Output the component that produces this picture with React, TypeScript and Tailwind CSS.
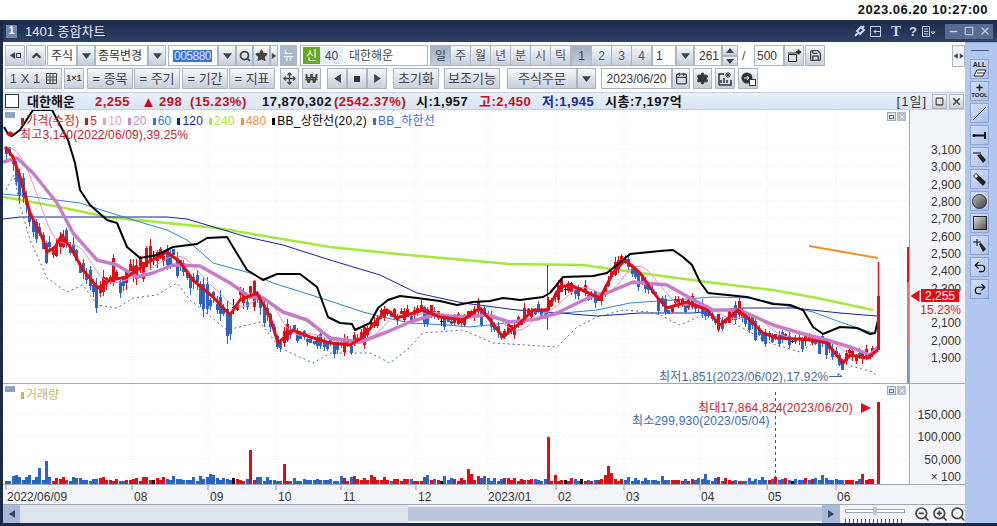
import type { ReactNode } from "react";
import { Search, Star, Move, ChevronUp, Settings, Plus, Undo2, Redo2, ZoomIn, ZoomOut, Calendar, Save, Minus, Square, X } from "lucide-react";

type Pt = [number, number];

const bbUpper: Pt[] = [[4,127],[8,134],[12,136],[20,130],[33,110],[52,110],[60,125],[68,140],[75,163],[80,190],[90,205],[107,220],[117,223],[127,247],[140,258],[157,255],[173,247],[197,244],[207,238],[227,237],[247,270],[263,280],[277,274],[300,274],[317,287],[328,317],[340,323],[352,324],[355,330],[370,323],[378,308],[388,300],[400,296],[417,298],[440,301],[457,305],[473,302],[490,301],[503,298],[520,300],[543,297],[550,293],[563,277],[593,276],[607,273],[613,268],[623,260],[630,254],[660,251],[673,250],[683,257],[692,265],[700,282],[708,293],[747,297],[773,304],[790,305],[803,310],[813,327],[823,334],[840,327],[857,328],[870,334],[875,333],[878,320]];
const ma240: Pt[] = [[3,197],[60,207],[107,217],[167,223],[217,228],[330,247],[397,254],[510,264],[583,265],[640,273],[707,282],[773,290],[817,298],[873,310]];
const ma120: Pt[] = [[3,219],[20,217],[167,217],[187,219],[247,237],[283,245],[330,260],[380,275],[417,293],[463,303],[517,310],[560,313],[597,316],[640,313],[693,313],[740,308],[793,308],[840,313],[877,316]];
const ma60: Pt[] = [[3,194],[33,197],[80,203],[133,220],[167,230],[187,240],[213,263],[250,273],[273,283],[330,301],[363,312],[387,318],[410,323],[447,325],[470,327],[507,323],[547,317],[563,313],[597,310],[630,303],[673,300],[713,297],[750,298],[783,305],[813,312],[840,322],[873,333]];
const ma20: Pt[] = [[3,162],[17,158],[33,173],[57,203],[73,233],[97,260],[117,265],[137,277],[153,273],[173,265],[200,266],[230,283],[250,297],[263,298],[283,312],[307,320],[330,338],[360,342],[387,332],[410,322],[433,315],[463,317],[487,315],[510,322],[537,319],[557,313],[590,297],[607,293],[633,282],[667,285],[690,298],[713,310],[740,310],[773,325],[800,333],[827,340],[853,348],[870,355],[878,347]];
const ma5: Pt[] = [[5,147],[13,157],[20,177],[30,213],[37,227],[42,237],[47,252],[55,247],[62,235],[72,250],[83,270],[98,288],[110,280],[127,277],[147,263],[167,252],[180,262],[193,280],[213,297],[230,315],[240,300],[257,293],[270,317],[278,343],[293,330],[310,337],[330,343],[350,345],[363,337],[373,325],[387,310],[397,318],[423,310],[440,317],[463,320],[480,308],[490,320],[503,337],[520,323],[533,310],[547,310],[560,287],[570,285],[593,295],[600,298],[613,273],[625,260],[640,273],[657,297],[667,308],[687,302],[707,310],[720,325],[738,310],[750,320],[763,333],[777,338],[813,340],[827,343],[843,363],[850,355],[867,358],[878,350]];
const bbLower: Pt[] = [[6,190],[14,175],[20,205],[30,240],[47,278],[67,292],[83,285],[97,305],[117,308],[133,298],[157,295],[177,283],[190,300],[227,330],[260,322],[280,348],[313,363],[330,353],[370,353],[390,363],[407,350],[423,333],[463,330],[493,343],[557,347],[577,327],[597,317],[623,310],[650,312],[660,315],[680,325],[707,313],[743,328],[767,342],[800,352],[820,338],[840,363],[873,372],[878,377]];

const toPoints = (pts: Pt[]) => pts.map((p) => p.join(",")).join(" ");

function interp(pts: Pt[], x: number) {
  if (x <= pts[0][0]) return pts[0][1];
  for (let i = 1; i < pts.length; i++) {
    if (x <= pts[i][0]) {
      const t = (x - pts[i - 1][0]) / (pts[i][0] - pts[i - 1][0]);
      return pts[i - 1][1] + t * (pts[i][1] - pts[i - 1][1]);
    }
  }
  return pts[pts.length - 1][1];
}

let seed = 20230620;
function rnd() {
  seed = (seed * 16807) % 2147483647;
  return (seed - 1) / 2147483646;
}

const RED = "#e00c16";
const BLUE = "#2a64c4";

// hand-read volume spikes, bar index -> height in px
const volumeSpikes: Record<number, number> = { 10: 16, 12: 23, 73: 34, 83: 20, 138: 15, 162: 47, 164: 9, 180: 18, 181: 11 };

const bars = Array.from({ length: 260 }, (_, i) => {
  const x = 6 + i * 3.345;
  const mid = interp(ma5, x);
  const slope = interp(ma5, x + 4) - interp(ma5, x - 4);
  const roll = rnd();
  const color = roll < 0.03 ? "#111111" : rnd() + slope * 0.09 > 0.5 ? BLUE : RED;
  const amp = x < 270 ? 1.6 : 1;
  const body = color === "#111111" ? 1 : (3 + rnd() * rnd() * 17) * amp;
  const top = mid - body * (color === BLUE ? 0.3 : 0.65) + (rnd() - 0.5) * 9 * amp;
  const wickUp = rnd() * 5 * amp;
  const wickDown = rnd() * 5 * amp;
  const vol = volumeSpikes[i] ?? Math.round(3 + rnd() * rnd() * 8);
  return { x: Math.round(x), top: Math.round(top), body: Math.round(body), wickUp, wickDown, color, vol };
});

const ma10: Pt[] = bars.map((b) => {
  let sum = 0;
  for (let k = 0; k < 8; k++) sum += interp(ma5, b.x - k * 3.3);
  return [b.x, sum / 8];
});

const months = [
  { label: "2022/06/09", x: 7, tick: 6 },
  { label: "08", x: 134, tick: 132 },
  { label: "09", x: 210, tick: 208 },
  { label: "10", x: 278, tick: 276 },
  { label: "11", x: 343, tick: 341 },
  { label: "12", x: 418, tick: 416 },
  { label: "2023/01", x: 488, tick: 488 },
  { label: "02", x: 558, tick: 556 },
  { label: "03", x: 626, tick: 624 },
  { label: "04", x: 701, tick: 700 },
  { label: "05", x: 768, tick: 767 },
  { label: "06", x: 837, tick: 836 },
];

const legend = [
  { swatch: "bg-[#e00c16]", text: "text-[#d0242c]", label: "가격(수정)" },
  { swatch: "bg-[#e00c16]", text: "text-[#d0242c]", label: "5" },
  { swatch: "bg-[#f09ad0]", text: "text-[#f09ad0]", label: "10" },
  { swatch: "bg-[#cc88d0]", text: "text-[#cc88d0]", label: "20" },
  { swatch: "bg-[#2a80d0]", text: "text-[#2a80d0]", label: "60" },
  { swatch: "bg-[#101fa0]", text: "text-[#101fa0]", label: "120" },
  { swatch: "bg-[#a0e840]", text: "text-[#a0e840]", label: "240" },
  { swatch: "bg-[#f09030]", text: "text-[#f09030]", label: "480" },
  { swatch: "bg-black", text: "text-black", label: "BB_상한선(20,2)" },
  { swatch: "bg-[#3a6ed8]", text: "text-[#3a6ed8]", label: "BB_하한선" },
];

const btn = "flex shrink-0 items-center justify-center h-[21px] border border-[#aab5c6] bg-gradient-to-b from-[#f6f8fb] to-[#c6cedb] text-[#444]";
const inputBox = "flex shrink-0 items-center h-[21px] border border-[#aab5c6] bg-white text-[#333]";
const dim = "text-[#8c95a5]";

function Tri({ dir, size = 7, color = "#3c4454" }: { dir: "l" | "r" | "u" | "d"; size?: number; color?: string }) {
  const d = { l: "M7 0L1 4l6 4z", r: "M1 0l6 4-6 4z", u: "M0 6l4-5 4 5z", d: "M0 2l4 5 4-5z" }[dir];
  return (
    <svg width={size} height={size} viewBox="0 0 8 8">
      <path d={d} fill={color} />
    </svg>
  );
}

function Drop({ className = "w-[18px]" }: { className?: string }) {
  return (
    <div className={`${btn} ${className}`}>
      <Tri dir="d" size={9} />
    </div>
  );
}

function TabBtn({ label, active }: { label: string; active?: boolean }) {
  return (
    <div className={`flex h-[19px] w-[20px] shrink-0 items-center justify-center border-r border-[#aab5c6] ${active ? "bg-gradient-to-b from-[#a4aebf] to-[#c4ccd9] text-[#3a4250]" : "bg-gradient-to-b from-[#f6f8fb] to-[#c6cedb] text-[#555]"}`}>
      {label}
    </div>
  );
}

function PaneControls() {
  return (
    <div className="absolute right-[3px] top-[2px] flex gap-[1px]">
      <div className="flex h-[9px] w-[9px] items-center justify-center border border-[#9aa6b8] bg-[#dfe4ec]">
        <div className="h-[4px] w-[5px] border border-[#667080]" />
      </div>
      <div className="flex h-[9px] w-[9px] items-center justify-center bg-[#b4becc] text-white">
        <X size={8} strokeWidth={2.5} />
      </div>
    </div>
  );
}

function ToolBtn({ children }: { children: ReactNode }) {
  return (
    <div className="flex h-[20px] w-[19px] shrink-0 items-center justify-center border border-[#8fa6d4] bg-gradient-to-br from-[#d4e0f8] to-[#a9bfe9]">
      {children}
    </div>
  );
}

function PriceChart() {
  return (
    <svg width="906" height="273" viewBox="3 110 906 273" className="block">
      {[149, 166, 184, 201, 218, 236, 253, 270, 288, 305, 322, 339, 357].map((y) => (
        <line key={y} x1="4" x2="906" y1={y} y2={y} stroke="#e6eaf0" strokeDasharray="1 2" />
      ))}
      {months.map((m) => (
        <line key={m.label} x1={m.tick} x2={m.tick} y1="110" y2="383" stroke="#e6eaf0" strokeDasharray="1 2" />
      ))}
      <polyline points={toPoints(ma240)} fill="none" stroke="#a4e83c" strokeWidth="2.5" />
      <polyline points={toPoints(ma120)} fill="none" stroke="#1420a0" strokeWidth="1" />
      <polyline points={toPoints(ma60)} fill="none" stroke="#2c86c8" strokeWidth="1" />
      <polyline points={toPoints(bbLower)} fill="none" stroke="#4a6a9c" strokeWidth="1" strokeDasharray="2 3" />
      <polyline points="809,246 878,258" fill="none" stroke="#f0902c" strokeWidth="2" />
      {bars.map((b) => (
        <g key={b.x} shapeRendering="crispEdges">
          <line x1={b.x + 0.5} x2={b.x + 0.5} y1={b.top - b.wickUp} y2={b.top + b.body + b.wickDown} stroke={b.color} />
          <rect x={b.x - 1} y={b.top} width="3" height={b.body} fill={b.color} />
        </g>
      ))}
      <line x1="547.5" x2="547.5" y1="265" y2="330" stroke={RED} />
      <polyline points={toPoints(ma10)} fill="none" stroke="#f090c8" strokeWidth="1" />
      <polyline points={toPoints(ma20)} fill="none" stroke="#c87cc8" strokeWidth="3.5" strokeLinejoin="round" />
      <polyline points={toPoints(ma5)} fill="none" stroke={RED} strokeWidth="3" strokeLinejoin="round" />
      <polyline points={toPoints(bbUpper)} fill="none" stroke="#000" strokeWidth="2" strokeLinejoin="round" />
      <line x1="878.5" x2="878.5" y1="262" y2="296" stroke={RED} strokeWidth="1.5" />
      <rect x="877" y="296" width="3" height="54" fill={RED} />
      <path d="M829 376.500h13m0 0l-4-3v3" fill="none" stroke="#3a6a9c" />
      <rect x="907" y="247" width="3" height="35" fill="#d81820" />
      <rect x="907" y="282" width="3" height="66" fill="#e87074" />
      <rect x="907" y="348" width="3" height="35" fill="#6a9ad8" />
      <path d="M6 134l4-3 4 3-4 3z" fill={RED} />
    </svg>
  );
}

function VolumeChart() {
  return (
    <svg width="906" height="100" viewBox="3 384 906 100" className="block">
      {[414, 436, 459].map((y) => (
        <line key={y} x1="4" x2="906" y1={y} y2={y} stroke="#e6eaf0" strokeDasharray="1 2" />
      ))}
      {months.map((m) => (
        <line key={m.label} x1={m.tick} x2={m.tick} y1="384" y2="484" stroke="#e6eaf0" strokeDasharray="1 2" />
      ))}
      <line x1="775.5" x2="775.5" y1="392" y2="484" stroke="#2a5a9c" strokeDasharray="3 3" />
      {bars.map((b) => (
        <rect key={b.x} x={b.x - 1} y={484 - b.vol} width="3" height={b.vol} fill={b.color} shapeRendering="crispEdges" />
      ))}
      <rect x="877" y="402" width="3" height="82" fill={RED} />
      <path d="M861 403l10 5-10 5z" fill={RED} />
    </svg>
  );
}

export default function App() {
  return (
    <div className="flex h-[526px] w-[997px] flex-col overflow-hidden bg-white font-['Liberation_Sans','Noto_Sans_CJK_KR',sans-serif] text-[12px] leading-none">
      <div className="h-[20px] shrink-0 pr-[9px] pt-[3px] text-right text-[13px] font-bold tracking-[0.5px] text-[#111]">2023.06.20 10:27:00</div>

      <div className="flex min-h-0 flex-1 flex-col bg-[#1c2946] pb-[3px] pl-[3px]">
        <div className="flex h-[22px] shrink-0 items-center bg-gradient-to-b from-[#1d2a4a] to-[#2e4067] text-white">
          <div className="ml-[3px] flex h-[13px] w-[11px] items-center justify-center bg-[#6f86ad] text-[10px] font-bold">1</div>
          <span className="ml-[8px] text-[13px] text-[#e6ebf4]">1401 종합차트</span>
          <div className="ml-auto flex items-center text-[#c8d2e2]">
            <svg width="12" height="12" viewBox="0 0 12 12"><path d="M1 11l3-3M3 6l3 3 4-4-3-3zM8 3l2-2" fill="none" stroke="currentColor" strokeWidth="2" /></svg>
            <svg className="ml-[4px]" width="12" height="11" viewBox="0 0 12 11"><path d="M.5.5h10v10h-10zM11 5.500H4m2-2l-2 2 2 2" fill="none" stroke="currentColor" /></svg>
            <span className="ml-[9px] font-['Liberation_Serif',serif] text-[15px] font-bold">T</span>
            <span className="ml-[8px] text-[13px] font-bold">?</span>
            <svg className="ml-[5px]" width="14" height="11" viewBox="0 0 14 11"><path d="M.5.500h7v10h-7zM2 3h4M2 5.500h4M2 8h4M9 6h4l-2 2z" fill="none" stroke="currentColor" /></svg>
            <div className="ml-[9px] flex h-[15px] w-[16px] items-center justify-center bg-[#566c90]"><Minus size={11} strokeWidth={3} /></div>
            <div className="flex h-[15px] w-[16px] items-center justify-center bg-[#566c90]"><Square size={10} strokeWidth={2.5} /></div>
            <div className="flex h-[15px] w-[16px] items-center justify-center bg-[#566c90]"><X size={12} strokeWidth={2.5} /></div>
            <div className="w-[4px]" />
          </div>
        </div>

        <div className="flex min-h-0 flex-1">
          <div className="flex w-[962px] shrink-0 flex-col bg-white">
            {/* 1st toolbar */}
            <div className="mt-[3px] flex h-[21px] shrink-0 items-center pl-[2px]">
              <div className={`${btn} w-[20px]`}><Tri dir="l" /><div className="h-[5px] w-[5px] border border-[#3c4454]" /></div>
              <div className={`${btn} ml-[1px] w-[20px]`}><ChevronUp size={13} strokeWidth={4} /></div>
              <div className={`${inputBox} ml-[1px] w-[30px] pl-[3px]`}>주식</div>
              <Drop />
              <div className={`${inputBox} w-[53px] pl-[2px]`}>종목변경</div>
              <Drop />
              <div className={`${inputBox} ml-[2px] w-[50px] pl-[4px]`}><span className="bg-[#3a74d8] px-px tracking-[-0.5px] text-[#dbe6fa]">005880</span></div>
              <Drop />
              <div className={`${btn} w-[17px]`}><Search size={12} strokeWidth={3.500} /></div>
              <div className={`${btn} w-[17px]`}><Star size={13} fill="currentColor" /></div>
              <div className={`${btn} w-[8px]`}><Tri dir="r" size={6} /></div>
              <div className="ml-[2px] flex h-[21px] w-[17px] shrink-0 items-center justify-center bg-[#a9b6cc] text-white">뉴</div>
              <div className={`${inputBox} ml-[3px] w-[128px] pl-[2px]`}>
                <div className="flex h-[17px] w-[17px] items-center justify-center bg-[#6aa818] text-white">신</div>
                <div className="flex h-[17px] w-[23px] items-center justify-center bg-[#e4eefa] text-[#445]">40</div>
                <span className="ml-[6px] text-[#444]">대한해운</span>
              </div>
              <div className="ml-[2px] flex border border-[#aab5c6]">
                {["일", "주", "월", "년", "분", "시", "틱"].map((t, i) => <TabBtn key={t} label={t} active={i === 0} />)}
              </div>
              <div className="flex border-y border-[#aab5c6]">
                {["1", "2", "3", "4"].map((t, i) => <TabBtn key={t} label={t} active={i === 0} />)}
              </div>
              <div className={`${inputBox} w-[24px] pl-[3px]`}>1</div>
              <Drop />
              <div className={`${inputBox} w-[28px] justify-end pr-[2px]`}>261</div>
              <div className="flex h-[21px] w-[16px] shrink-0 flex-col">
                <div className={`${btn} !h-[11px] w-[16px]`}><Tri dir="u" size={8} /></div>
                <div className={`${btn} !h-[10px] w-[16px]`}><Tri dir="d" size={8} /></div>
              </div>
              <span className="ml-[4px] w-[12px] text-[#444]">/</span>
              <div className={`${inputBox} w-[30px] pl-[2px]`}>500</div>
              <div className={`${btn} w-[20px]`}><svg width="15" height="13" viewBox="0 0 15 13"><path d="M1.500 5.500h8v7h-8zM1 4h9" fill="none" stroke="#222" /><path d="M9 3h5M11.500 .5v5" stroke="#222" strokeWidth="2" /></svg></div>
              <div className={`${btn} ml-[1px] w-[20px]`}><Save size={13} strokeWidth={2.5} /></div>
              <div className="ml-auto flex h-[22px] w-[13px] items-center justify-center border border-[#aab5c6] bg-[#f0f3f8]"><Tri dir="l" size={6} /><Tri dir="r" size={6} /></div>
            </div>

            {/* 2nd toolbar */}
            <div className="mt-[2px] flex h-[21px] shrink-0 items-center pl-[2px] text-[13px]">
              <div className={`${btn} ${dim} w-[57px] gap-[6px]`}>
                <span>1 X 1</span>
                <svg width="11" height="11" viewBox="0 0 11 11"><path d="M.5.5h10v10H.5zM.5 4h10M.5 7h10M4 .5v10M7 .5v10" fill="none" stroke="#444" /></svg>
              </div>
              <div className={`${btn} ml-[2px] w-[20px] text-[9px] font-bold`}>1×1</div>
              <div className={`${btn} ${dim} ml-[3px] w-[46px]`}>= 종목</div>
              <div className={`${btn} ${dim} ml-[1px] w-[46px]`}>= 주기</div>
              <div className={`${btn} ${dim} ml-[2px] w-[46px]`}>= 기간</div>
              <div className={`${btn} ${dim} ml-[1px] w-[46px]`}>= 지표</div>
              <div className={`${btn} ml-[5px] w-[19px]`}><Move size={13} strokeWidth={2.5} /></div>
              <div className={`${btn} ml-[3px] w-[19px] font-bold`}>₩</div>
              <div className={`${btn} ml-[6px] w-[20px]`}><Tri dir="l" size={9} /></div>
              <div className={`${btn} w-[20px]`}><div className="h-[6px] w-[6px] bg-[#333]" /></div>
              <div className={`${btn} w-[20px]`}><Tri dir="r" size={9} /></div>
              <div className={`${btn} ml-[6px] w-[46px]`}>초기화</div>
              <div className={`${btn} ml-[5px] w-[56px]`}>보조기능</div>
              <div className={`${btn} ml-[7px] w-[70px]`}>주식주문</div>
              <Drop className="w-[19px]" />
              <div className={`${inputBox} ml-[5px] w-[71px] justify-center text-[12px]`}>2023/06/20</div>
              <div className={`${btn} w-[18px]`}><Calendar size={13} strokeWidth={2.5} /></div>
              <div className={`${btn} ml-[3px] w-[19px]`}><Settings size={13} fill="#333" strokeWidth={2} /></div>
              <div className={`${btn} ml-[3px] w-[20px]`}><svg width="14" height="14" viewBox="0 0 14 14"><path d="M1 13V2h5M1 13h12V8M3 11V8M6 11V6M9 11V8" fill="none" stroke="#333" strokeWidth="1.500" /><path d="M8 1l4 4M12 1L8 5M10 0v6M7 3h6" stroke="#333" /></svg></div>
              <div className={`${btn} ml-[3px] w-[20px]`}><svg width="15" height="14" viewBox="0 0 15 14"><circle cx="6" cy="6" r="5.500" fill="#333" /><path d="M3 6h5M6 4l2 2-2 2" stroke="#fff" fill="none" /><rect x="8.500" y="7.500" width="6" height="6" fill="#fff" stroke="#333" /></svg></div>
            </div>

            {/* stock info */}
            <div className="mt-[3px] flex h-[18px] shrink-0 items-center border-y border-[#c2d0e4] bg-gradient-to-b from-[#e8f0fb] to-[#d8e5f7] pl-[2px] text-[13px] font-bold tracking-[0.5px] text-[#111]">
              <div className="h-[14px] w-[14px] border border-[#333] bg-white" />
              <span className="ml-[8px] w-[68px] tracking-normal">대한해운</span>
              <span className="w-[46px] text-[#c4101c]">2,255</span>
              <span className="w-[18px] text-[15px] text-[#c4101c]">▲</span>
              <span className="w-[31px] text-[#c4101c]">298</span>
              <span className="w-[72px] text-[#c4101c]">(15.23%)</span>
              <span className="w-[72px]">17,870,302</span>
              <span className="w-[82px] text-[#c4101c]">(2542.37%)</span>
              <span className="w-[63px]">시:1,957</span>
              <span className="w-[63px] text-[#c4101c]">고:2,450</span>
              <span className="w-[63px] text-[#1a2aa0]">저:1,945</span>
              <span className="w-[80px]">시총:7,197억</span>
              <span className="ml-auto text-[13px] font-normal tracking-[1px] text-[#333]">[1일]</span>
              <div className={`${btn} ml-[5px] !h-[15px] w-[15px]`}><Square size={9} strokeWidth={3} /></div>
              <div className={`${btn} ml-[2px] mr-[1px] !h-[15px] w-[15px]`}><X size={11} strokeWidth={3.500} /></div>
            </div>

            {/* price pane */}
            <div className="flex h-[274px] shrink-0 border-b border-[#9aa8ba]">
              <div className="relative w-[907px] shrink-0 overflow-hidden border-r border-[#9aa8ba]">
                <PriceChart />
                <div className="absolute left-[2px] top-[2px] h-[6px] w-[10px] bg-[#8ea2c2]" />
                <div className="absolute left-[18px] top-[5px] flex items-center gap-[6px] text-[12px] tracking-[0.2px]">
                  {legend.map((l) => (
                    <span key={l.label} className={`flex items-center gap-[2px] ${l.text}`}>
                      <span className={`h-[7px] w-[3px] ${l.swatch}`} />
                      {l.label}
                    </span>
                  ))}
                </div>
                <div className="absolute left-[17px] top-[19px] tracking-[0.15px] text-[#c8202c]">최고3,140(2022/06/09),39.25%</div>
                <div className="absolute left-[656px] top-[261px] tracking-[0.2px] text-[#3a6a9c]">최저1,851(2023/06/02),17.92%</div>
                <PaneControls />
              </div>
              <div className="relative flex-1 bg-[#f3f5f8] pt-[32px] text-right text-[12px] leading-[17.33px] text-[#333]">
                {["3,100", "3,000", "2,900", "2,800", "2,700", "2,600", "2,500", "2,400", "2,300", "", "2,100", "2,000", "1,900"].map((v, i) => (
                  <div key={i} className="h-[17.33px] pr-[4px]">{v}</div>
                ))}
                <div className="absolute left-[-1px] top-[180px]"><Tri dir="l" size={12} color={RED} /></div>
                <div className="absolute left-[11px] top-[179px] flex h-[13px] w-[38px] items-center justify-end bg-[#e00c16] pr-[4px] leading-none text-white">2,255</div>
                <div className="absolute right-[4px] top-[194px] leading-none text-[#d0242c]">15.23%</div>
              </div>
            </div>

            {/* volume pane */}
            <div className="flex h-[100px] shrink-0">
              <div className="relative w-[907px] shrink-0 overflow-hidden border-r border-[#9aa8ba]">
                <VolumeChart />
                <div className="absolute left-[2px] top-[2px] h-[6px] w-[10px] bg-[#8ea2c2]" />
                <div className="absolute left-[18px] top-[5px] flex items-center gap-[2px] text-[#c8b860]">
                  <span className="h-[7px] w-[3px] bg-[#c8b860]" />거래량
                </div>
                <div className="absolute left-[695px] top-[18px] tracking-[0.2px] text-[#c8202c]">최대17,864,824(2023/06/20)</div>
                <div className="absolute left-[629px] top-[31px] tracking-[0.2px] text-[#3a6ab0]">최소299,930(2023/05/04)</div>
                <PaneControls />
              </div>
              <div className="flex flex-1 flex-col bg-[#f3f5f8] pr-[4px] pt-[25px] text-right text-[#333]">
                <div className="h-[22px]">150,000</div>
                <div className="h-[23px]">100,000</div>
                <div className="h-[17px]">50,000</div>
                <div>× 100</div>
              </div>
            </div>

            {/* date axis */}
            <div className="h-[21px] shrink-0 border-y border-[#9aa8ba] bg-[#f3f5f8]">
              <svg width="906" height="19" viewBox="3 485 906 19" className="block">
                {months.map((m) => (
                  <g key={m.label}>
                    <line x1={m.tick} x2={m.tick} y1="485" y2="490" stroke="#8a96a8" />
                    <text x={m.x} y="501" fontSize="12" fill="#333">{m.label}</text>
                  </g>
                ))}
              </svg>
            </div>

            {/* scroll bar */}
            <div className="flex min-h-0 flex-1 items-center bg-[#f3f5f8]">
              <div className="flex h-full w-[17px] shrink-0 items-center justify-center bg-[#a9b8d8]"><Tri dir="l" size={8} color="#34466a" /></div>
              <div className="h-full w-[388px] shrink-0 bg-[#dfe3ec]" />
              <div className="h-[14px] w-[414px] shrink-0 bg-[#b9c6de]" />
              <div className="flex h-full w-[18px] shrink-0 items-center justify-center bg-[#a9b8d8]"><Tri dir="r" size={8} color="#34466a" /></div>
              <div className="relative ml-[5px] h-full w-[60px] shrink-0">
                <div className="absolute left-0 right-0 top-[4px] h-[4px] border border-[#9aa4b4] bg-white" />
                <div className="absolute left-[28px] top-[2px] h-[8px] w-[4px] bg-[#b8c2d2]" />
                <div className="absolute bottom-0 left-0 right-0 h-[4px] bg-[repeating-linear-gradient(90deg,#555_0,#555_1px,transparent_1px,transparent_4px)]" />
              </div>
              <div className="ml-[9px] flex gap-[2px] text-[#444]">
                <ZoomOut size={16} strokeWidth={2.5} />
                <ZoomIn size={16} strokeWidth={2.5} />
                <Search size={16} strokeWidth={2.5} />
              </div>
            </div>
          </div>

          {/* drawing tools */}
          <div className="flex min-w-0 flex-1 flex-col items-center gap-[2px] border-t border-[#8fa6d4] bg-[#b2c7f0] pr-[3px] pt-[7px]">
            <div className="mb-[6px] h-px w-[18px] bg-[#4a5a78]" />
            <ToolBtn><div className="flex flex-col items-center text-[7px] font-bold leading-[8px] text-[#222]">ALL<svg width="14" height="8" viewBox="0 0 14 8"><path d="M1 7l3-6h9l-3 6zM4 4h7" fill="#fff" stroke="#222" /></svg></div></ToolBtn>
            <ToolBtn><div className="flex flex-col items-center text-[6px] font-bold leading-[7px] text-[#222]"><Plus size={9} strokeWidth={4} />TOOL</div></ToolBtn>
            <ToolBtn><svg width="15" height="15"><path d="M1 14L14 1" stroke="#333" /></svg></ToolBtn>
            <ToolBtn><svg width="15" height="9"><path d="M1 4.500h13" stroke="#111" strokeWidth="2" /><path d="M13 1v7" stroke="#111" strokeWidth="2" /><circle cx="2" cy="4.500" r="1.500" fill="#111" /></svg></ToolBtn>
            <ToolBtn><svg width="15" height="13"><path d="M1 2h8" stroke="#111" /><path d="M5 4l4-1 5 6-3 3z" fill="#222" /></svg></ToolBtn>
            <ToolBtn><svg width="15" height="15"><path d="M1 4l3-3 10 9-3 4z" fill="#222" /><path d="M2 4l2-2 2 2-2 2z" fill="#fff" /></svg></ToolBtn>
            <ToolBtn><div className="h-[15px] w-[15px] rounded-full border border-[#333] bg-gradient-to-br from-[#bbb] to-[#444]" /></ToolBtn>
            <ToolBtn><div className="h-[14px] w-[14px] border border-[#222] bg-gradient-to-br from-[#ddd] to-[#555]" /></ToolBtn>
            <ToolBtn><svg width="15" height="15"><path d="M1 4h8M5 1v7" stroke="#111" /><path d="M7 6l2-1 5 6-3 3z" fill="#222" /></svg></ToolBtn>
            <ToolBtn><Undo2 size={14} /></ToolBtn>
            <ToolBtn><Redo2 size={14} /></ToolBtn>
          </div>
        </div>
      </div>
    </div>
  );
}
